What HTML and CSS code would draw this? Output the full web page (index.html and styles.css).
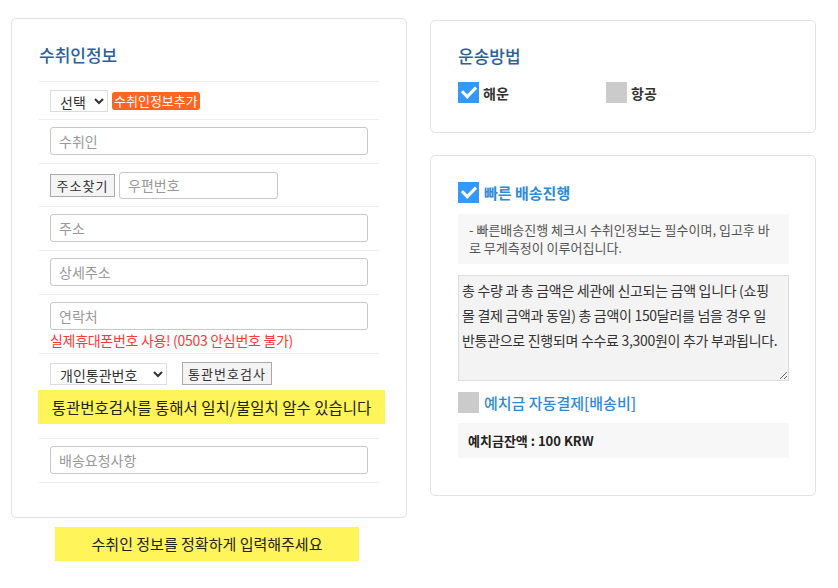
FILE: index.html
```html
<!DOCTYPE html>
<html>
<head>
  <title>주문서 작성</title>
  <link rel="stylesheet" href="styles.css">
</head>
<body>

  <div class="wrap">
    <div class="col-left">
      <div class="card card-receiver">
        <h3 class="card-title">수취인정보</h3>
        <div class="rows">
          <div class="row row-select">
            <select class="sel sel-small"><option>선택</option></select>
            <span class="badge-add">수취인정보추가</span>
          </div>
          <div class="row">
            <input type="text" class="inp" placeholder="수취인">
          </div>
          <div class="row row-zip">
            <button class="btn">주소찾기</button>
            <input type="text" class="inp inp-zip" placeholder="우편번호">
          </div>
          <div class="row">
            <input type="text" class="inp" placeholder="주소">
          </div>
          <div class="row">
            <input type="text" class="inp" placeholder="상세주소">
          </div>
          <div class="row row-phone">
            <input type="text" class="inp" placeholder="연락처">
            <p class="warn">실제휴대폰번호 사용! (0503 안심번호 불가)</p>
          </div>
          <div class="row row-customs">
            <div class="customs-line">
              <select class="sel sel-customs"><option>개인통관번호</option></select>
              <button class="btn btn-check">통관번호검사</button>
            </div>
            <div class="notice notice-customs">통관번호검사를 통해서 일치/불일치 알수 있습니다</div>
          </div>
          <div class="row row-last">
            <input type="text" class="inp" placeholder="배송요청사항">
          </div>
        </div>
      </div>
      <div class="notice notice-bottom">수취인 정보를 정확하게 입력해주세요</div>
    </div>

    <div class="col-right">
      <div class="card card-ship">
        <h3 class="card-title">운송방법</h3>
        <div class="ship-options">
          <label class="opt opt-sea"><span class="chk on"></span>해운</label>
          <label class="opt"><span class="chk"></span>항공</label>
        </div>
      </div>

      <div class="card card-fast">
        <label class="opt opt-big"><span class="chk on"></span>빠른 배송진행</label>
        <div class="info-box">- 빠른배송진행 체크시 수취인정보는 필수이며, 입고후 바로 무게측정이 이루어집니다.</div>
        <textarea class="memo">총 수량 과 총 금액은 세관에 신고되는 금액 입니다 (쇼핑
몰 결제 금액과 동일) 총 금액이 150달러를 넘을 경우 일
반통관으로 진행되며 수수료 3,300원이 추가 부과됩니다.</textarea>
        <label class="opt opt-deposit"><span class="chk"></span>예치금 자동결제[배송비]</label>
        <div class="balance">예치금잔액 : 100 KRW</div>
      </div>
    </div>
  </div>

  <script>
    // 체크박스 토글
    document.querySelectorAll(".chk").forEach(function (box) {
      box.parentNode.addEventListener("click", function () {
        box.classList.toggle("on");
      });
    });
  </script>

</body>
</html>
```

FILE: styles.css
```css
body {
  margin: 0;
  font-family: "Noto Sans CJK KR", "Noto Sans", sans-serif;
  font-size: 14px;
  color: #333;
  background: #fff;
}
.wrap {
  display: flex;
  align-items: flex-start;
  padding: 18px 0 0 11px;
}
.card {
  background: #fff;
  border: 1px solid #e3e3e3;
  border-radius: 5px;
  box-sizing: border-box;
}
.card-title {
  margin: 0;
  font-size: 17px;
  font-weight: 500;
  color: #2d5f9b;
  line-height: 24px;
}

/* 왼쪽 - 수취인정보 */
.col-left {
  width: 396px;
}
.card-receiver {
  height: 500px;
  padding: 24px 27px 0 27px;
}
.card-receiver .card-title {
  height: 38px;
}
.rows {
  border-bottom: 1px solid #eee;
}
.row {
  border-top: 1px solid #eee;
  box-sizing: border-box;
  padding: 7px 0 0 11px;
  height: 44px;
}
.row-select {
  height: 38px;
  display: flex;
  align-items: center;
  padding-top: 0;
  gap: 4px;
}
.row-zip {
  display: flex;
  align-items: center;
  gap: 4px;
  padding-top: 0;
  height: 43px;
}
.row-phone {
  height: 59px;
}
.row-customs {
  height: 85px;
  padding-left: 0;
}
.row-last {
  height: 44px;
}
.inp {
  display: block;
  width: 318px;
  height: 28px;
  box-sizing: border-box;
  border: 1px solid #c8c8cc;
  border-radius: 3px;
  padding: 0 8px;
  font-family: inherit;
  font-size: 14px;
  color: #333;
}
.inp::placeholder {
  color: #999;
}
.inp-zip {
  width: 159px;
  height: 27px;
}
.sel {
  height: 22px;
  box-sizing: border-box;
  border: 1px solid #ddd;
  background: #fff;
  font-family: inherit;
  font-size: 14px;
  color: #333;
  padding: 0 2px 0 5px;
}
.sel-small {
  width: 58px;
}
.sel-customs {
  width: 117px;
}
.badge-add {
  background: #ff6420;
  color: #fff;
  font-size: 13px;
  line-height: 18px;
  height: 18px;
  padding: 0 2px;
  border-radius: 3px;
}
.btn {
  height: 23px;
  box-sizing: border-box;
  border: 1px solid #aaa;
  background: #f4f4f4;
  font-family: inherit;
  font-size: 13px;
  color: #333;
  padding: 0 5px;
  letter-spacing: 1px;
}
.row-zip .btn {
  width: 65px;
}
.warn {
  margin: 0;
  color: #ff3838;
  font-size: 14px;
  letter-spacing: -0.3px;
  line-height: 20px;
}
.customs-line {
  display: flex;
  align-items: center;
  gap: 15px;
  padding-left: 11px;
  margin-top: 1px;
}
.btn-check {
  width: 90px;
}
.notice {
  background: #fff45a;
  color: #222;
  font-size: 15px;
  text-align: center;
  height: 34px;
  line-height: 34px;
}
.notice-customs {
  margin: 5px -6px 0 -1px;
  font-size: 15.5px;
}
.notice-bottom {
  width: 304px;
  margin: 9px 0 0 44px;
}

/* 오른쪽 */
.col-right {
  margin-left: 23px;
  padding-top: 2px;
}
.card-ship {
  width: 386px;
  height: 113px;
  padding: 23px 27px 0 27px;
}
.ship-options {
  display: flex;
  margin-top: 14px;
}
.opt {
  display: flex;
  align-items: center;
  font-size: 14px;
  font-weight: bold;
  color: #333;
  cursor: pointer;
}
.opt-sea {
  width: 148px;
}
.chk {
  width: 21px;
  height: 21px;
  background: #cbcbcb;
  margin-right: 4px;
  position: relative;
}
.chk.on {
  background: #3399ff;
}
.chk.on::after {
  content: "";
  position: absolute;
  left: 4px;
  top: 4px;
  width: 11px;
  height: 6px;
  border-left: 3px solid #fff;
  border-bottom: 3px solid #fff;
  transform: rotate(-45deg);
}
.card-fast {
  width: 386px;
  height: 341px;
  margin-top: 22px;
  padding: 26px 26px 0 27px;
}
.opt-big {
  font-size: 15px;
  color: #2e8ad8;
}
.opt-big .chk {
  margin-right: 5px;
}
.info-box {
  background: #f7f7f7;
  margin-top: 11px;
  padding: 7px 10px 8px 11px;
  font-size: 13px;
  line-height: 18px;
  color: #555;
  height: 50px;
  box-sizing: border-box;
}
.memo {
  display: block;
  width: 331px;
  height: 106px;
  box-sizing: border-box;
  margin-top: 11px;
  border: 1px solid #ddd;
  background: #f3f3f3;
  font-family: inherit;
  font-size: 14px;
  letter-spacing: -0.3px;
  line-height: 25px;
  color: #333;
  padding: 2px 3px;
  resize: vertical;
  overflow: hidden;
}
.opt-deposit {
  margin-top: 11px;
  font-size: 15px;
  font-weight: 500;
  color: #2e8ad8;
}
.opt-deposit .chk {
  margin-right: 5px;
}
.balance {
  background: #f7f7f7;
  margin-top: 10px;
  height: 35px;
  line-height: 35px;
  padding-left: 10px;
  font-size: 13px;
  font-weight: bold;
  color: #222;
}
```
